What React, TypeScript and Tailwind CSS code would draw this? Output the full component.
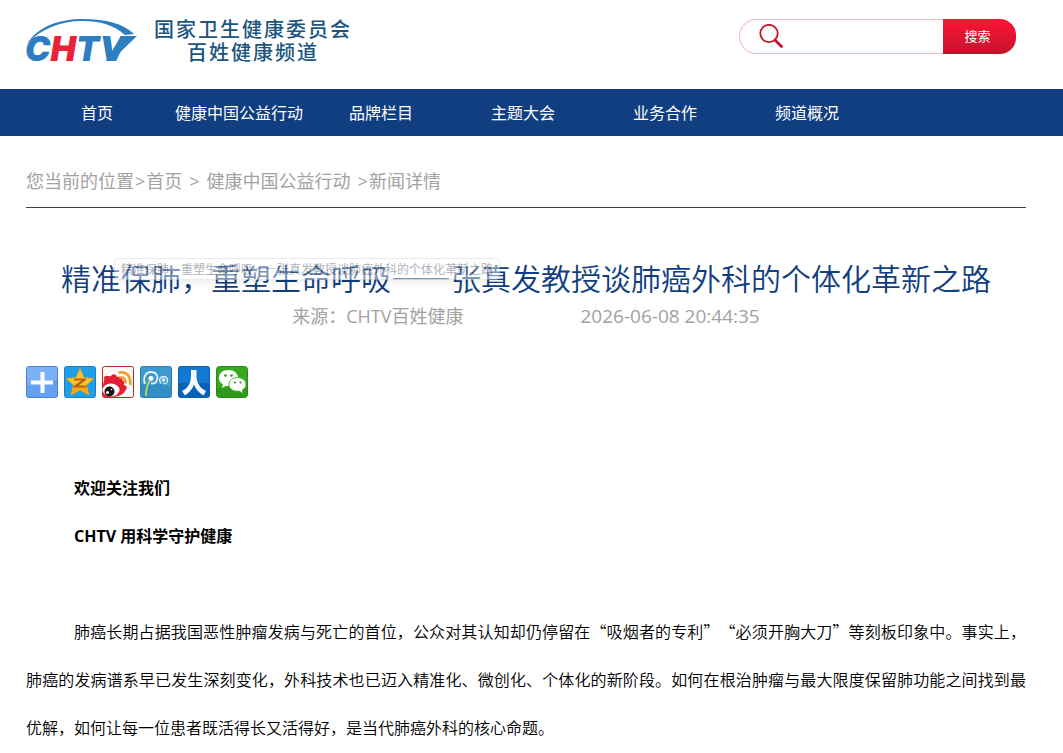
import React from "react";

const navItems = ["首页", "健康中国公益行动", "品牌栏目", "主题大会", "业务合作", "频道概况"];

const articleTitle = "精准保肺，重塑生命呼吸——张真发教授谈肺癌外科的个体化革新之路";

const Logo = () => (
  <svg viewBox="0 0 112 46" className="h-[46px] w-[112px] overflow-visible" role="img" aria-label="CHTV">
    <path
      d="M1 26 C12 8 34 1 57 1 C80 1 98 6 108 16 L99 17 C88 7 74 3 56 3 C35 3 14 11 1 26 Z"
      fill="#2d7dc0"
    />
    <path d="M95 18 H111 L85 43 H80 Z" fill="#2d7dc0" />
    <text
      x="-1"
      y="43"
      fontSize="34"
      fontWeight="900"
      fontStyle="italic"
      fill="#2d7dc0"
      className="font-['Inter','Liberation_Sans',sans-serif]"
    >
      C<tspan fill="#e92238">H</tspan>TV
    </text>
  </svg>
);

const SearchIcon = () => (
  <svg viewBox="0 0 26 26" className="h-[26px] w-[26px] shrink-0" fill="none" stroke="#c6142c" aria-hidden="true">
    <circle cx="10" cy="9.500" r="8.700" strokeWidth="1.800" />
    <path d="M16 16 L22.500 22.500" strokeWidth="2.800" strokeLinecap="round" />
  </svg>
);

const shareLinks = [
  {
    label: "更多分享",
    icon: (
      <>
        <rect x=".5" y=".5" width="31" height="31" rx="2" fill="#65a1f3" stroke="#4a80cd" />
        <path d="M1 1 H31 V14 Q16 14 1 19 Z" fill="#7db1f7" />
        <path d="M14.500 6 H18.500 V14.500 H27 V18.500 H18.500 V27 H14.500 V18.500 H5 V14.500 H14.500 Z" fill="#fff" />
      </>
    ),
  },
  {
    label: "QQ空间",
    icon: (
      <>
        <rect x=".5" y=".5" width="31" height="31" rx="2" fill="#1e9fea" stroke="#1780c2" />
        <path
          d="M16 2.500 L20 11.500 L30 12.500 L22.500 19 L25 29 L16 24 L7 29 L9.500 19 L2 12.500 L12 11.500 Z"
          fill="#fdc62f"
          stroke="#e39a16"
          strokeWidth=".8"
          strokeLinejoin="round"
        />
        <path d="M9.500 19 L22.500 20 L25 29 L16 24 L7 29 Z" fill="#f7a91e" />
        <path d="M10 12.500 H22 V14 L14.500 19.500 H22.500 V21.500 H9.500 V20 L17.500 14.500 H10 Z" fill="#b9600d" />
      </>
    ),
  },
  {
    label: "新浪微博",
    icon: (
      <>
        <rect x=".5" y=".5" width="31" height="31" rx="2" fill="#faf7f7" stroke="#c22525" />
        <path
          d="M1 20 C1 16 3 15 2 11 C4 9 7 11 9 10 C11 7 14 8 15 11 C18 10 21 11 20 14 C23 15 22 17 22 19 C26 20 25 23 23 25 C21 29 15 31 9 31 H2 Q1 31 1 30 Z"
          fill="#e51c33"
        />
        <ellipse cx="9" cy="24" rx="8.500" ry="6.500" fill="#fff" />
        <circle cx="7.500" cy="25.500" r="5" fill="#151515" />
        <circle cx="5.500" cy="26.500" r="1.500" fill="#fff" />
        <circle cx="9.500" cy="23.500" r=".8" fill="#fff" />
        <path d="M17.500 6.500 Q28 5 28.500 18" fill="none" stroke="#f89a2a" strokeWidth="2.600" strokeLinecap="round" />
        <path d="M18 11.500 Q23.500 11 23.500 16.500" fill="none" stroke="#f89a2a" strokeWidth="2.400" strokeLinecap="round" />
      </>
    ),
  },
  {
    label: "腾讯微博",
    icon: (
      <>
        <rect x=".5" y=".5" width="31" height="31" rx="2" fill="#3d9ace" stroke="#3180af" />
        <path d="M1 18 H31 V31 H1 Z" fill="#318fc5" />
        <g fill="none" stroke="#e5f3fa">
          <circle cx="11" cy="12.500" r="2.200" fill="#fff" />
          <path d="M5 18 C2.500 11 6 6 11 6 C16 6 18.500 10 17 14 C16 17 13.500 18 11 17.500" strokeWidth="1.800" />
          <circle cx="23.500" cy="14" r="1.400" fill="#fff" />
          <path d="M21 17.500 C18 14 20 10.500 23.500 10.500 C27 10.500 28.500 14 27 16.500 C26 18 24.500 18 23 17.500" strokeWidth="1.300" />
        </g>
        <path d="M10 15 C7 18 6 23 6 30" fill="none" stroke="#b7dc4d" strokeWidth="1.800" />
        <path d="M26 17 Q28 19 30 20" fill="none" stroke="#82c89c" />
      </>
    ),
  },
  {
    label: "人人网",
    icon: (
      <>
        <rect x=".5" y=".5" width="31" height="31" rx="2" fill="#1379d0" stroke="#0960ad" />
        <path d="M1 17 H31 V31 H1 Z" fill="#0862b8" />
        <path
          d="M13 4 H18.500 V10 C18.500 17 22 22 28 25 L25.500 29.500 C21 27 17.500 23 16 18.500 C14.500 23 11 27 7 29.500 L4 25 C10 22 13 17 13 10 Z"
          fill="#f4faff"
        />
      </>
    ),
  },
  {
    label: "微信",
    icon: (
      <>
        <rect x=".5" y=".5" width="31" height="31" rx="3" fill="#38a81f" stroke="#258917" />
        <path d="M1 22 H31 V31 H1 Z" fill="#2e991a" />
        <path
          d="M12.500 4 C6.500 4 3 7.500 3 12 C3 14.800 4.500 17 7 18.500 L6 22 L10 19.800 C16.500 21 22 17.500 22 12 C22 7.500 18 4 12.500 4 Z"
          fill="#fff"
        />
        <path
          d="M21.500 11.500 C16.500 11.500 13 14.500 13 18.500 C13 23 17.500 26 23 25 L27 27.500 L26.300 24 C28.500 22.800 30 21 30 18.500 C30 14.500 26.500 11.500 21.500 11.500 Z"
          fill="#fff"
          stroke="#38a81f"
          strokeWidth=".9"
        />
        <g fill="#2f8f1e">
          <circle cx="9.500" cy="9.500" r="1.300" />
          <circle cx="15.500" cy="9.500" r="1.300" />
          <circle cx="19" cy="16.500" r="1.100" />
          <circle cx="24.500" cy="16.500" r="1.100" />
        </g>
      </>
    ),
  },
];

const Header = () => (
  <header className="flex items-start justify-between pb-[25px] pl-[26px] pr-[47px] pt-[18px]">
    <a href="#" className="flex items-start gap-4">
      <Logo />
      <span className="flex flex-col items-center text-xl font-medium leading-[23px] tracking-widest text-[#1b5580]">
        <span>国家卫生健康委员会</span>
        <span>百姓健康频道</span>
      </span>
    </a>
    <form className="mt-px flex h-[35px] w-[277px]" onSubmit={(e) => e.preventDefault()}>
      <label className="flex min-w-0 flex-1 items-center gap-2 rounded-l-full border border-r-0 border-[#f9b9c0] pl-[19px]">
        <SearchIcon />
        <input type="text" aria-label="搜索" className="h-7 w-full min-w-0 text-sm outline-none" />
      </label>
      <button
        type="submit"
        className="w-[73px] rounded-r-2xl bg-linear-to-b from-[#ff1433] to-[#c3142e] pr-1 text-[13px] text-white"
      >
        搜索
      </button>
    </form>
  </header>
);

const Navbar = () => (
  <nav className="bg-[#113e80] pl-[26px]">
    <ul className="flex">
      {navItems.map((item) => (
        <li key={item} className="w-[142px]">
          <a href="#" className="block whitespace-nowrap pt-px text-center text-base leading-[46px] text-white">
            {item}
          </a>
        </li>
      ))}
    </ul>
  </nav>
);

const Breadcrumb = () => (
  <div className="flex border-b border-[#333f55] pb-3 pt-[31px] text-lg text-[#a2a2a2]">
    <span>您当前的位置</span>
    <span className="mx-px">&gt;</span>
    <a href="#">首页</a>
    <span className="mx-[7px]">&gt;</span>
    <a href="#">健康中国公益行动</a>
    <span className="ml-[7px] mr-px">&gt;</span>
    <span>新闻详情</span>
  </div>
);

const App = () => {
  return (
    <div className="bg-white font-['Open_Sans','Noto_Sans_CJK_SC',sans-serif] text-black" lang="zh-CN">
      <Header />
      <Navbar />

      <main className="pl-[26px] pr-[37px]">
        <Breadcrumb />

        <div className="relative pb-px pt-[47px] font-['Noto_Sans_CJK_SC',sans-serif]">
          <h1 className="whitespace-nowrap text-center text-[30px] font-[350] leading-[44px] text-[#113e80]">
            {articleTitle}
          </h1>
          {/* fading tooltip of the title */}
          <div
            role="tooltip"
            className="absolute left-[88px] top-[50px] whitespace-nowrap rounded-sm border border-gray-300 bg-white px-[6px] text-xs leading-5 text-gray-600 opacity-45 shadow-md"
          >
            {articleTitle}
          </div>
        </div>

        <div className="flex justify-center gap-[117px] text-lg leading-8 text-[#a2a2a2]">
          <span>来源：CHTV百姓健康</span>
          <time className="text-[19px]">2026-06-08 20:44:35</time>
        </div>

        <div className="mt-[34px] flex gap-1.5">
          {shareLinks.map((link) => (
            <a key={link.label} href="#" aria-label={link.label}>
              <svg viewBox="0 0 32 32" className="block h-8 w-8">
                {link.icon}
              </svg>
            </a>
          ))}
        </div>

        <article className="mt-[66px] text-base leading-[48px]">
          <p className="indent-12 font-bold">欢迎关注我们</p>
          <p className="indent-12 font-bold">CHTV 用科学守护健康</p>
          <p className="mt-[47px] text-justify indent-12 font-['Noto_Sans_CJK_SC',sans-serif] font-[350] [text-spacing-trim:space-all]">
            肺癌长期占据我国恶性肿瘤发病与死亡的首位，公众对其认知却仍停留在“吸烟者的专利”“必须开胸大刀”等刻板印象中。事实上，肺癌的发病谱系早已发生深刻变化，外科技术也已迈入精准化、微创化、个体化的新阶段。如何在根治肿瘤与最大限度保留肺功能之间找到最优解，如何让每一位患者既活得长又活得好，是当代肺癌外科的核心命题。
          </p>
        </article>
      </main>
    </div>
  );
};

export default App;
